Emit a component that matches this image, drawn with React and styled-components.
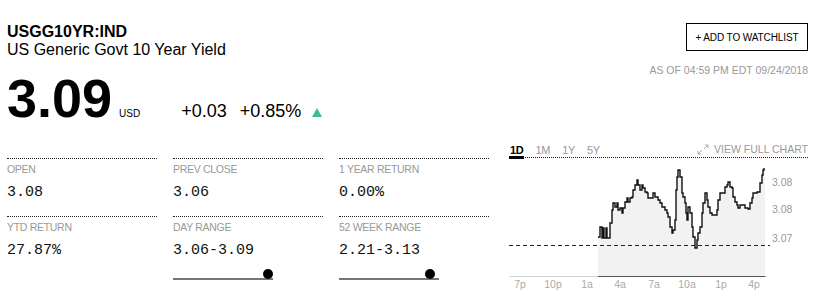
import React from "react";
import styled, { createGlobalStyle } from "styled-components";

const Global = createGlobalStyle`
  html, body { margin: 0; padding: 0; background: #fff; }
  body { font-family: "Liberation Sans", Arial, sans-serif; color: #000; }
`;

const Page = styled.div`
  width: 818px;
  height: 306px;
  box-sizing: border-box;
  padding: 23px 10px 0 7px;
  overflow: hidden;
`;

const TopRow = styled.div`
  display: flex;
  justify-content: space-between;
  align-items: flex-start;
`;

const Identity = styled.div`
  display: flex;
  flex-direction: column;
`;

const Ticker = styled.div`
  font-size: 16px;
  line-height: 18px;
  font-weight: 700;
`;

const Name = styled.div`
  font-size: 16px;
  line-height: 18px;
`;

const PriceRow = styled.div`
  display: flex;
  align-items: baseline;
  margin-top: 13px;
`;

const Price = styled.div`
  font-size: 54px;
  line-height: 53px;
  font-weight: 700;
  letter-spacing: 0;
`;

const Currency = styled.span`
  font-size: 10px;
  margin-left: 7px;
`;

const Change = styled.span`
  font-size: 18px;
  margin-left: ${(p) => p.$gap}px;
`;

const UpArrow = styled.span`
  display: inline-block;
  width: 0;
  height: 0;
  margin-left: 11px;
  border-left: 5px solid transparent;
  border-right: 5px solid transparent;
  border-bottom: 9px solid #3dbd8c;
`;

const Meta = styled.div`
  display: flex;
  flex-direction: column;
  align-items: flex-end;
`;

const WatchButton = styled.button`
  box-sizing: border-box;
  width: 122px;
  height: 28px;
  border: 1px solid #000;
  background: #fff;
  font-family: "Liberation Sans", Arial, sans-serif;
  font-size: 10px;
  color: #000;
  padding: 0;
  letter-spacing: -0.1px;
`;

const Stamp = styled.div`
  margin-top: 13px;
  font-size: 10.5px;
  line-height: 12px;
  color: #999;
`;

const MainRow = styled.div`
  display: flex;
  justify-content: space-between;
  align-items: flex-start;
  margin-top: 18px;
`;

const Stats = styled.div`
  display: grid;
  grid-template-columns: repeat(3, 150px);
  column-gap: 16px;
  margin-top: 15px;
`;

const Cell = styled.div`
  height: 58px;
  border-top: 1px dotted #222;
  padding-top: 4px;
  box-sizing: border-box;
  display: flex;
  flex-direction: column;
`;

const Label = styled.div`
  font-size: 10.5px;
  line-height: 12px;
  color: #999;
  letter-spacing: -0.3px;
`;

const Value = styled.div`
  margin-top: 9px;
  font-family: "Liberation Mono", "Courier New", monospace;
  font-size: 15px;
  line-height: 17px;
  color: #111;
`;

const RangeBar = styled.div`
  position: relative;
  flex-shrink: 0;
  margin-top: 19px;
  width: 100px;
  height: 2px;
  background: #777;
`;

const RangeDot = styled.span`
  position: absolute;
  top: -9px;
  width: 10px;
  height: 10px;
  border-radius: 50%;
  background: #000;
`;

const ChartCol = styled.div`
  width: 299px;
  display: flex;
  flex-direction: column;
`;

const TabBar = styled.div`
  display: flex;
  align-items: flex-end;
  justify-content: space-between;
  border-bottom: 1px dotted #222;
  height: 14px;
`;

const Tabs = styled.div`
  display: flex;
  gap: 10px;
  align-items: flex-end;
  height: 100%;
`;

const Tab = styled.span`
  font-size: 11px;
  line-height: 12px;
  padding: 0 1px;
  color: ${(p) => (p.$active ? "#000" : "#999")};
  font-weight: ${(p) => (p.$active ? 700 : 400)};
  border-bottom: 3px solid ${(p) => (p.$active ? "#000" : "transparent")};
  margin-bottom: -2px;
  letter-spacing: -0.3px;
`;

const FullChart = styled.span`
  display: flex;
  align-items: center;
  gap: 5px;
  font-size: 10.5px;
  line-height: 12px;
  color: #999;
  margin-bottom: 2px;
`;

const ChartSvg = styled.svg`
  display: block;
  width: 299px;
  height: 140px;
  font-family: "Liberation Sans", Arial, sans-serif;
`;

const pts = [
  [598,237],[600,227],[602,238],[603,228],[604,238],[606,228],[607,238],[610,223],[612,210],[613,203],
  [615,207],[617,203],[618,210],[620,208],[622,213],[623,208],[625,202],[627,198],[628,202],[630,198],
  [632,197],[633,190],[635,185],[637,180],[638,185],[640,190],[642,185],[643,188],[645,192],[647,193],
  [648,198],[652,198],[653,193],[655,197],[658,200],[660,203],[662,207],[665,210],[667,213],[668,217],
  [670,227],[672,233],[673,230],[675,220],[676,190],[677,177],[678,170],[680,177],[682,193],[683,197],
  [685,203],[686,213],[687,220],[688,207],[690,213],[692,227],[693,237],[695,248],[697,240],[698,233],
  [700,227],[702,213],[703,203],[705,193],[707,200],[708,207],[710,213],[712,215],[715,215],[717,210],
  [718,200],[720,193],[723,193],[725,187],[727,185],[728,182],[730,187],[732,188],[733,197],[735,202],
  [737,205],[738,208],[740,205],[743,205],[745,208],[748,209],[750,203],[752,198],[753,193],[757,192],
  [758,192],[760,183],[762,175],[763,170],[764,168]
];

// stepped rendering to mimic the jagged tick line
const stepped = [];
pts.forEach((p, i) => {
  if (i > 0) stepped.push([p[0], pts[i - 1][1]]);
  stepped.push(p);
});

const linePath = "M" + stepped.map((p) => p.join(",")).join(" L");
const areaPath = `M598,276 L${stepped.map((p) => p.join(",")).join(" L")} L765,168 L765,276 Z`;

const xLabels = [
  ["7p", 520], ["10p", 553], ["1a", 587], ["4a", 620],
  ["7a", 654], ["10a", 687], ["1p", 721], ["4p", 754],
];

const yLabels = [["3.08", 186], ["3.08", 213], ["3.07", 242]];

function Chart() {
  return (
    <ChartSvg viewBox="509 158 299 140">
      <path d={areaPath} fill="#f2f2f2" />
      <line x1="510" y1="276.5" x2="767" y2="276.5" stroke="#d0d0d0" strokeWidth="1" />
      <line x1="598" y1="276.5" x2="765" y2="276.5" stroke="#555" strokeWidth="1" />
      <line x1="509" y1="245.5" x2="770" y2="245.5" stroke="#222" strokeWidth="1" strokeDasharray="4 3" />
      <path d={linePath} fill="none" stroke="#111" strokeWidth="1.4" strokeLinejoin="miter" />
      {yLabels.map(([t, y], i) => (
        <text key={i} x="772" y={y} fontSize="10.5" fill="#999">{t}</text>
      ))}
      {xLabels.map(([t, x]) => (
        <text key={t} x={x} y="288" fontSize="10.5" fill="#aaa" textAnchor="middle">{t}</text>
      ))}
    </ChartSvg>
  );
}

const ExpandIcon = () => (
  <svg width="12" height="11" viewBox="0 0 12 11" fill="none" stroke="#aaa" strokeWidth="1">
    <path d="M1 10 L5 6 M1 10 L1 7 M1 10 L4 10" />
    <path d="M11 1 L7 5 M11 1 L8 1 M11 1 L11 4" />
  </svg>
);

const stats = [
  { label: "OPEN", value: "3.08" },
  { label: "PREV CLOSE", value: "3.06" },
  { label: "1 YEAR RETURN", value: "0.00%" },
  { label: "YTD RETURN", value: "27.87%" },
  { label: "DAY RANGE", value: "3.06-3.09", dot: 95 },
  { label: "52 WEEK RANGE", value: "2.21-3.13", dot: 91 },
];

export default function App() {
  return (
    <>
      <Global />
      <Page>
        <TopRow>
          <Identity>
            <Ticker>USGG10YR:IND</Ticker>
            <Name>US Generic Govt 10 Year Yield</Name>
            <PriceRow>
              <Price>3.09</Price>
              <Currency>USD</Currency>
              <Change $gap={41}>+0.03</Change>
              <Change $gap={13}>+0.85%</Change>
              <UpArrow />
            </PriceRow>
          </Identity>
          <Meta>
            <WatchButton>+ ADD TO WATCHLIST</WatchButton>
            <Stamp>AS OF 04:59 PM EDT 09/24/2018</Stamp>
          </Meta>
        </TopRow>
        <MainRow>
          <Stats>
            {stats.map((s) => (
              <Cell key={s.label}>
                <Label>{s.label}</Label>
                <Value>{s.value}</Value>
                {s.dot != null && (
                  <RangeBar>
                    <RangeDot style={{ left: `${s.dot - 5}px` }} />
                  </RangeBar>
                )}
              </Cell>
            ))}
          </Stats>
          <ChartCol>
            <TabBar>
              <Tabs>
                <Tab $active>1D</Tab>
                <Tab>1M</Tab>
                <Tab>1Y</Tab>
                <Tab>5Y</Tab>
              </Tabs>
              <FullChart>
                <ExpandIcon />
                VIEW FULL CHART
              </FullChart>
            </TabBar>
            <Chart />
          </ChartCol>
        </MainRow>
      </Page>
    </>
  );
}
